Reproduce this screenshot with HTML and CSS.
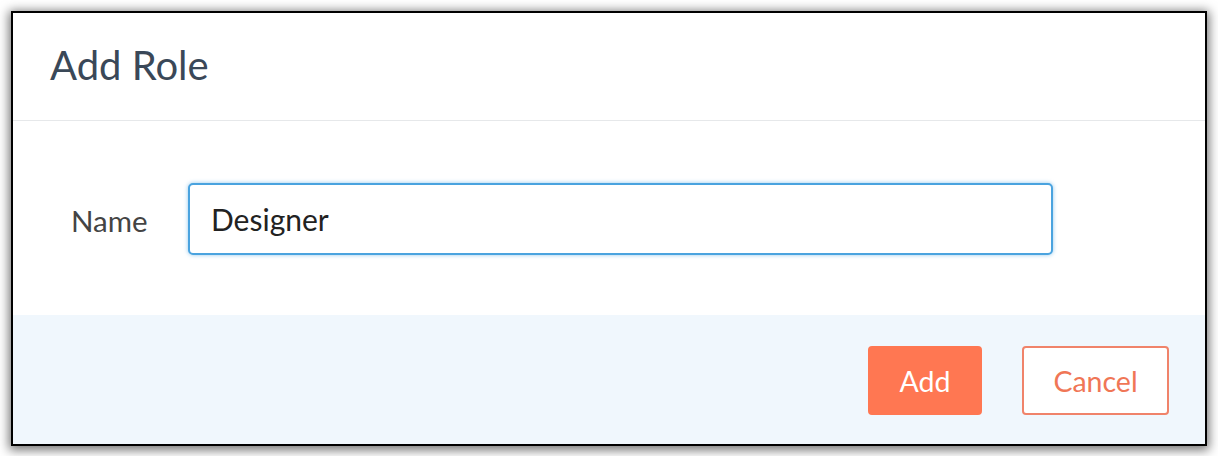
FILE: index.html
```html
<!DOCTYPE html>
<html>
<head>
<meta charset="utf-8">
<link rel="stylesheet" href="styles.css">
</head>
<body>
<div class="dialog">
  <div class="dialog-header">
    <h1 class="dialog-title">Add Role</h1>
  </div>
  <div class="dialog-body">
    <label class="field-label" for="role-name">Name</label>
    <input class="field-input" id="role-name" type="text" value="Designer">
  </div>
  <div class="dialog-footer">
    <button class="btn btn-primary">Add</button>
    <button class="btn btn-secondary">Cancel</button>
  </div>
</div>
</body>
</html>
```

FILE: styles.css
```css
html, body {
  margin: 0;
  padding: 0;
  background: #ffffff;
}
body {
  padding: 11px;
  font-family: Lato, "Open Sans", sans-serif;
}
.dialog {
  width: 1196px;
  height: 435px;
  box-sizing: border-box;
  border: 2px solid #000;
  background: #fff;
  box-shadow: 0 2px 10px 2px rgba(0,0,0,0.55);
  display: flex;
  flex-direction: column;
}
.dialog-header {
  height: 108px;
  box-sizing: border-box;
  border-bottom: 1px solid #e6e8ea;
  display: flex;
  align-items: center;
  padding-left: 37px;
}
.dialog-title {
  margin: 0;
  font-weight: 400;
  font-size: 40px;
  color: #3a4858;
  line-height: 1;
  padding-bottom: 4px;
}
.dialog-body {
  height: 194px;
  display: flex;
  align-items: center;
  padding-left: 58px;
  box-sizing: border-box;
}
.field-label {
  font-size: 29.5px;
  color: #444;
  width: 117px;
  margin-top: 4px;
}
.field-input {
  width: 865px;
  height: 72px;
  box-sizing: border-box;
  border: 2px solid #4aa3df;
  border-radius: 5px;
  box-shadow: 0 0 4px rgba(74,163,223,0.6);
  padding: 0 0 0 21px;
  font-family: Lato, "Open Sans", sans-serif;
  font-size: 30px;
  color: #222;
  outline: none;
  margin-top: 2px;
}
.dialog-footer {
  flex: 1;
  background: #f0f7fd;
  display: flex;
  align-items: center;
  justify-content: flex-end;
  gap: 40px;
  padding-right: 36px;
}
.btn {
  height: 69px;
  box-sizing: border-box;
  border-radius: 4px;
  font-family: Lato, "Open Sans", sans-serif;
  font-size: 28.5px;
  padding: 0;
  margin-top: 2px;
}
.btn-primary {
  width: 114px;
  background: #ff7752;
  border: 2px solid #ff7752;
  color: #fff;
}
.btn-secondary {
  width: 147px;
  background: #fff;
  border: 2px solid #f0836a;
  color: #f07656;
}
```
